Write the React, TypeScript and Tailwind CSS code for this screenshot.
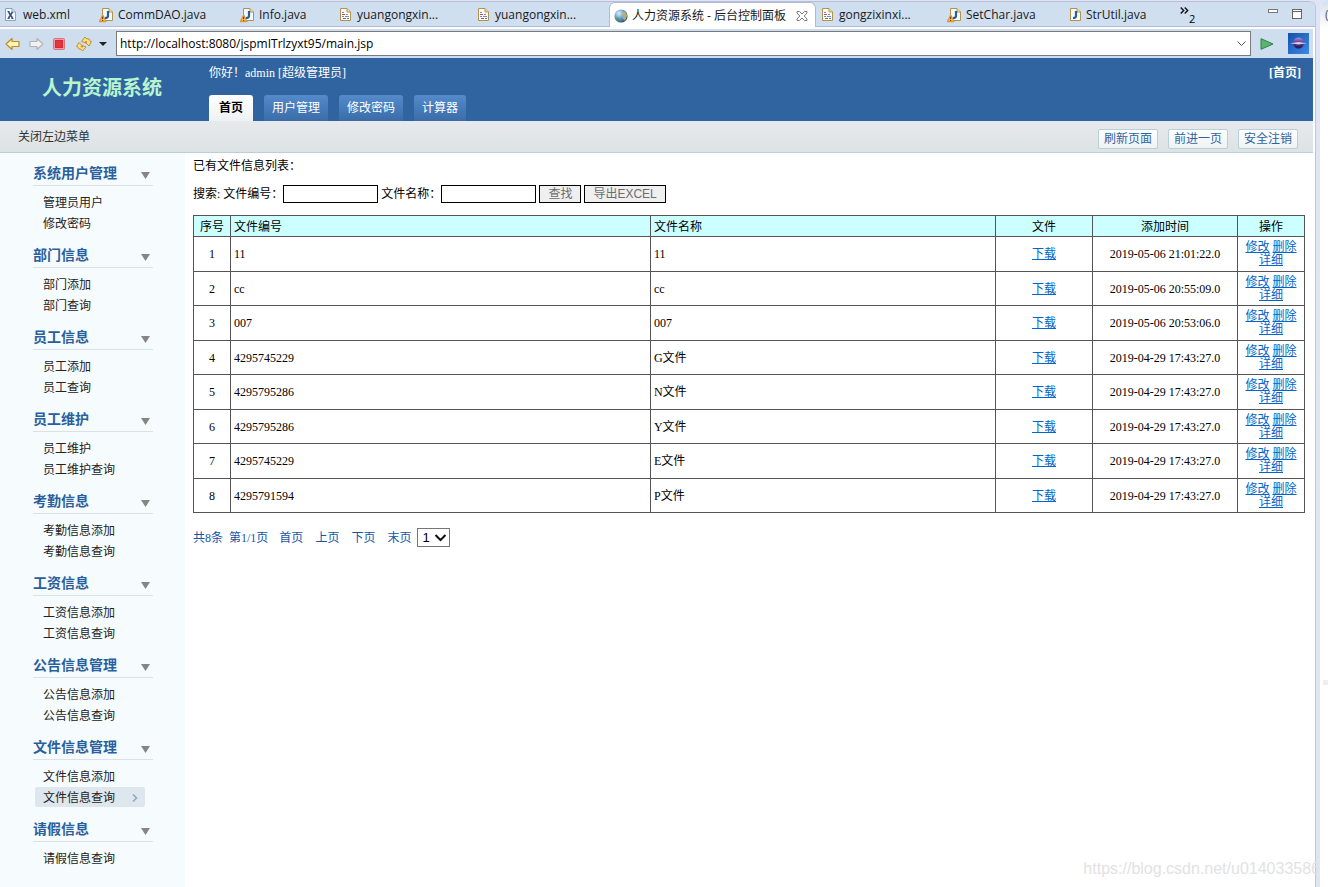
import React from 'react';

type FileKind = 'xml' | 'java' | 'javaWarn' | 'jsp';

const editorTabs: { label: string; kind: FileKind; width: string }[] = [
  { label: 'web.xml', kind: 'xml', width: 'w-[95px]' },
  { label: 'CommDAO.java', kind: 'javaWarn', width: 'w-[141px]' },
  { label: 'Info.java', kind: 'javaWarn', width: 'w-[98px]' },
  { label: 'yuangongxin...', kind: 'jsp', width: 'w-[138px]' },
  { label: 'yuangongxin...', kind: 'jsp', width: 'w-[133px]' },
];

const editorTabsAfter: { label: string; kind: FileKind; width: string }[] = [
  { label: 'gongzixinxi...', kind: 'jsp', width: 'w-[127px]' },
  { label: 'SetChar.java', kind: 'javaWarn', width: 'w-[120px]' },
  { label: 'StrUtil.java', kind: 'java', width: 'w-[113px]' },
];

const menu = [
  { title: '系统用户管理', items: ['管理员用户', '修改密码'] },
  { title: '部门信息', items: ['部门添加', '部门查询'] },
  { title: '员工信息', items: ['员工添加', '员工查询'] },
  { title: '员工维护', items: ['员工维护', '员工维护查询'] },
  { title: '考勤信息', items: ['考勤信息添加', '考勤信息查询'] },
  { title: '工资信息', items: ['工资信息添加', '工资信息查询'] },
  { title: '公告信息管理', items: ['公告信息添加', '公告信息查询'] },
  { title: '文件信息管理', items: ['文件信息添加', '文件信息查询'] },
  { title: '请假信息', items: ['请假信息查询'] },
];

const activeItem = '文件信息查询';

const rows = [
  ['11', '11', '2019-05-06 21:01:22.0'],
  ['cc', 'cc', '2019-05-06 20:55:09.0'],
  ['007', '007', '2019-05-06 20:53:06.0'],
  ['4295745229', 'G文件', '2019-04-29 17:43:27.0'],
  ['4295795286', 'N文件', '2019-04-29 17:43:27.0'],
  ['4295795286', 'Y文件', '2019-04-29 17:43:27.0'],
  ['4295745229', 'E文件', '2019-04-29 17:43:27.0'],
  ['4295791594', 'P文件', '2019-04-29 17:43:27.0'],
];

function FileIcon({ kind }: { kind: FileKind }) {
  return (
    <svg width="16" height="16" viewBox="0 0 16 16" className="shrink-0" aria-hidden="true">
      {kind === 'xml' && (
        <>
          <path d="M1.500 1.500H8l3.500 3.500v8.500h-10z" fill="#f4f9ff" stroke="#93a1b0" />
          <path d="M8 1.500V5h3.500" fill="#d9e2ee" stroke="#93a1b0" />
          <path d="M4.500 5l4 6M8.500 5l-4 6" stroke="#2d4f80" strokeWidth="1.500" />
          <path d="M3.500 4.500h2M7.500 11.500h2M3.500 11.500h2" stroke="#2d4f80" />
        </>
      )}
      {kind === 'jsp' && (
        <>
          <path d="M2.500 1.500H9l3.500 3.500v8.500h-10z" fill="#fff" stroke="#b5924a" />
          <path d="M9 1.500V5h3.500" fill="#f3dfa8" stroke="#b5924a" />
          <path d="M4 5.500h2" stroke="#6a8bd0" />
          <path d="M4 7.500h3" stroke="#d0435c" />
          <path d="M8 7.500h2" stroke="#6a8bd0" />
          <path d="M4 9.500h2M7 9.500h4" stroke="#6a8bd0" />
          <path d="M5 11.500h3" stroke="#d0435c" />
          <path d="M9 11.500h2" stroke="#3f9a6a" />
        </>
      )}
      {(kind === 'java' || kind === 'javaWarn') && (
        <>
          <path d="M3.500 1.500H10l3.500 3.500v8.500h-10z" fill="#f5faff" stroke="#b5924a" />
          <path d="M10 1.500V5h3.500" fill="#f3dfa8" stroke="#b5924a" />
          <path d="M9 4v4.700q0 2.300-3 2.300" fill="none" stroke="#23619f" strokeWidth="2.200" />
        </>
      )}
      {kind === 'javaWarn' && (
        <>
          <path d="M3.700 8L7 14.500H.5z" fill="#f8c468" stroke="#e0953a" strokeWidth="1.300" strokeLinejoin="round" />
          <path d="M3.700 9.800v2.400M3.700 13v1" stroke="#5a3208" />
        </>
      )}
    </svg>
  );
}

function GlobeIcon() {
  return (
    <svg width="14" height="14" viewBox="0 0 14 14" className="shrink-0" aria-hidden="true">
      <defs>
        <radialGradient id="globe" cx="35%" cy="30%" r="75%">
          <stop offset="0" stopColor="#d9ecfa" />
          <stop offset="0.5" stopColor="#6fa2cf" />
          <stop offset="1" stopColor="#27507f" />
        </radialGradient>
      </defs>
      <circle cx="7" cy="7" r="6.600" fill="url(#globe)" />
      <path d="M1 9Q3 8 5 9l1 3.500Q2.500 12.500 1 9z" fill="#4f9a5c" opacity=".8" />
      <path d="M8 4l3-1.500L13 6l-1 4-2 1.500L8.500 8z" fill="#c3b56e" opacity=".85" />
    </svg>
  );
}

function EditorTab({ label, kind, width }: { label: string; kind: FileKind; width: string }) {
  return (
    <button type="button" className={`flex shrink-0 items-center gap-[3px] whitespace-nowrap pt-[2px] ${width}`}>
      <FileIcon kind={kind} />
      <span>{label}</span>
    </button>
  );
}

function EditorTabs() {
  return (
    <div className="flex h-[26px] items-stretch rounded-tr-md border-t border-[#b9bfd6] bg-[#cfdff0] text-[12px] text-[#1a1a1a]">
      <div className="flex border-b border-[#b4b9d6] pl-1">
        {editorTabs.map((tab, i) => (
          <EditorTab key={i} {...tab} />
        ))}
      </div>
      <div className="flex w-[207px] shrink-0 items-center gap-1 whitespace-nowrap rounded-t-md border-x border-t border-[#b4b9d6] bg-white pl-1 pt-px">
        <GlobeIcon />
        <button type="button">人力资源系统 - 后台控制面板</button>
        <button type="button" aria-label="关闭" className="ml-[6px]">
          <svg width="12" height="12" viewBox="0 0 12 12" aria-hidden="true">
            <path
              d="M1 1.500h2.500L6 4l2.500-2.500H11V3L8.200 6 11 9v1.500H8.500L6 8l-2.500 2.500H1V9l2.800-3L1 3z"
              fill="#fff"
              stroke="#7c7c7c"
            />
          </svg>
        </button>
      </div>
      <div className="flex flex-1 items-center border-b border-[#b4b9d6] pl-1 pr-3">
        {editorTabsAfter.map((tab) => (
          <EditorTab key={tab.label} {...tab} />
        ))}
        <button type="button" className="flex items-center text-black" aria-label="更多标签">
          <svg width="9" height="7" viewBox="0 0 9 7" className="mb-2" aria-hidden="true">
            <path d="M.7.500l3 3-3 3M4.700.500l3 3-3 3" fill="none" stroke="#111" strokeWidth="1.400" />
          </svg>
          <span className="mt-2 text-[11px] leading-none">2</span>
        </button>
        <div className="ml-auto flex items-center gap-3">
          <button type="button" aria-label="最小化">
            <svg width="11" height="14" viewBox="0 0 11 14" aria-hidden="true">
              <rect x=".5" y="2.500" width="9" height="3" fill="#fff" stroke="#777" />
            </svg>
          </button>
          <button type="button" aria-label="最大化">
            <svg width="12" height="14" viewBox="0 0 12 14" aria-hidden="true">
              <rect x="1.500" y="2.500" width="9" height="9" fill="#fff" stroke="#666" />
              <path d="M2 4.500h8" stroke="#666" />
            </svg>
          </button>
        </div>
      </div>
    </div>
  );
}

function BrowserBar() {
  return (
    <div className="mr-[2px] flex h-[31px] items-center border-t-2 border-white bg-[#cfdeef] pl-[5px] pr-1">
      <div className="flex shrink-0 items-center">
        <button type="button" aria-label="后退" className="w-[23px]">
          <svg width="16" height="14" viewBox="0 0 16 14" aria-hidden="true">
            <path d="M1 7l6-5.500V4.500h7v5H7v3z" fill="#fff3b8" stroke="#c08a1e" strokeLinejoin="round" strokeWidth="1.200" />
          </svg>
        </button>
        <button type="button" aria-label="前进" className="w-[25px]">
          <svg width="16" height="14" viewBox="0 0 16 14" aria-hidden="true">
            <path d="M15 7L9 1.500V4.500H2v5h7v3z" fill="#f2f2f2" stroke="#b2b2b2" strokeLinejoin="round" strokeWidth="1.200" />
          </svg>
        </button>
        <button type="button" aria-label="停止" className="w-[23px]">
          <svg width="12" height="12" viewBox="0 0 12 12" aria-hidden="true">
            <rect x=".5" y=".5" width="11" height="11" rx="1" fill="#f0a0a4" stroke="#d8737a" />
            <rect x="2.500" y="2.500" width="7" height="7" fill="#e5343c" stroke="#d42a35" />
          </svg>
        </button>
        <button type="button" aria-label="刷新" className="w-[23px]">
          <svg width="16" height="16" viewBox="0 0 16 16" aria-hidden="true">
            <path
              d="M5.500 5.500L9 1l1 1.500q4-.5 4.500 3l1 0L13 10 9.500 6.500l1.500-.5q-.5-1-1.500-.5l.5 1.500z"
              fill="#fbdf8c"
              stroke="#c4902a"
              strokeLinejoin="round"
            />
            <path
              d="M10 11l-3.500 4-1-1.500q-3.500 0-4-3H.500L3 6.500 6.500 10l-1.500.5q.5 1 1.500.5L6 9.500z"
              fill="#fbdf8c"
              stroke="#c4902a"
              strokeLinejoin="round"
            />
          </svg>
        </button>
        <button type="button" aria-label="刷新选项" className="w-[17px]">
          <svg width="8" height="4" viewBox="0 0 8 4" aria-hidden="true">
            <path d="M0 0h8L4 4z" fill="#222" />
          </svg>
        </button>
      </div>
      <div className="flex h-[25px] min-w-0 flex-1 items-center border border-[#7a7a7a] bg-white pl-[3px] pr-1">
        <input
          aria-label="地址"
          defaultValue="http://localhost:8080/jspmITrlzyxt95/main.jsp"
          className="min-w-0 flex-1 text-[12px] text-black outline-none"
        />
        <svg width="9" height="6" viewBox="0 0 9 6" aria-hidden="true">
          <path d="M.5.500l4 4 4-4" fill="none" stroke="#555" />
        </svg>
      </div>
      <button type="button" aria-label="转到" className="ml-[9px] shrink-0">
        <svg width="14" height="12" viewBox="0 0 14 12" aria-hidden="true">
          <path d="M1 .700L13 6 1 11.300z" fill="#5cb56c" stroke="#2b8143" strokeLinejoin="round" />
        </svg>
      </button>
      <svg width="21" height="21" viewBox="0 0 21 21" className="ml-[14px] shrink-0" aria-hidden="true">
        <defs>
          <linearGradient id="eclipseSky" x2="1" y2="1">
            <stop offset="0" stopColor="#1450a8" />
            <stop offset="1" stopColor="#3b8bea" />
          </linearGradient>
          <linearGradient id="eclipseOrb" x2="0" y2="1">
            <stop offset="0" stopColor="#a58fd0" />
            <stop offset=".45" stopColor="#5d3f94" />
            <stop offset="1" stopColor="#1f1650" />
          </linearGradient>
        </defs>
        <rect width="21" height="21" fill="url(#eclipseSky)" />
        <circle cx="10.500" cy="10" r="5.500" fill="url(#eclipseOrb)" />
        <path d="M2 10.200L10.500 9l8.500 1.200-8.500 1.200z" fill="#d9c9f2" />
      </svg>
    </div>
  );
}

function SiteHeader() {
  const tab =
    'flex h-[26px] items-center rounded-t-[3px] bg-gradient-to-b from-[#548bcb] to-[#3a6ca8] px-2 text-white';
  return (
    <header className="flex h-[63px] bg-[#3064a0] pr-3">
      <h1 className="w-[209px] shrink-0 pl-[42px] pt-4 text-[20px] font-bold leading-7 text-[#b8f5cf]">人力资源系统</h1>
      <div className="flex min-w-0 flex-1 flex-col justify-between">
        <div className="flex justify-between pt-[6px] leading-[18px] text-white">
          <span>你好！admin [超级管理员]</span>
          <a href="#home" className="font-bold">[首页]</a>
        </div>
        <nav className="flex gap-[11px]">
          <a
            href="#home"
            className="flex h-[26px] items-center rounded-t-[3px] bg-gradient-to-b from-white to-[#eef1f2] px-[10px] font-bold text-black"
          >
            首页
          </a>
          <a href="#users" className={tab}>用户管理</a>
          <a href="#password" className={tab}>修改密码</a>
          <a href="#calculator" className={tab}>计算器</a>
        </nav>
      </div>
    </header>
  );
}

function ActionBar() {
  return (
    <div className="flex h-8 items-center justify-between border-b border-[#bccfd8] bg-gradient-to-b from-[#e6eaec] to-[#dde2e4] pl-[18px] pr-[15px] pt-px">
      <button type="button" className="text-[#333]">关闭左边菜单</button>
      <div className="flex gap-[10px] pt-[3px]">
        {['刷新页面', '前进一页', '安全注销'].map((label) => (
          <button
            key={label}
            type="button"
            className="h-5 w-[60px] rounded-[2px] border border-[#b8d0d8] bg-gradient-to-b from-white to-[#eef2f3] leading-4 text-[#2f63a3]"
          >
            {label}
          </button>
        ))}
      </div>
    </div>
  );
}

function Sidebar() {
  return (
    <aside className="w-[185px] shrink-0 bg-[#f6fbfd] pl-[33px] pr-8 pt-[10px]">
      {menu.map((group) => (
        <section key={group.title} className="pb-3">
          <h2 className="flex h-[23px] items-center justify-between border-b border-[#dae2e8] pb-px pr-[3px] text-[14px] font-bold text-[#2a5f9e]">
            {group.title}
            <svg width="9" height="7" viewBox="0 0 9 7" className="mt-[3px]" aria-hidden="true">
              <path d="M0 0h9L4.500 7z" fill="#858585" />
            </svg>
          </h2>
          <ul className="flex flex-col gap-px pl-[2px] pr-2 pt-[6px]">
            {group.items.map((item) => (
              <li key={item}>
                <a
                  href="#menu"
                  className={`flex h-5 items-center justify-between rounded-[2px] pl-2 pr-[7px] pt-px text-[#222] ${
                    item === activeItem ? 'bg-[#dee6ee]' : ''
                  }`}
                >
                  {item}
                  {item === activeItem && (
                    <svg width="6" height="8" viewBox="0 0 6 8" aria-hidden="true">
                      <path d="M1 .500L4.500 4 1 7.500" fill="none" stroke="#93a9c4" strokeWidth="1.600" />
                    </svg>
                  )}
                </a>
              </li>
            ))}
          </ul>
        </section>
      ))}
    </aside>
  );
}

function SearchForm() {
  const button = 'h-[18px] border border-black bg-[#efefef] px-2 leading-4 text-[#6d6d6d]';
  const input = 'h-[18px] w-[95px] border border-black bg-white px-1 outline-none';
  return (
    <form className="mt-[10px] flex h-[18px] items-center gap-[3px]" onSubmit={(e) => e.preventDefault()}>
      <span>搜索:</span>
      <div className="flex items-center">
        <label htmlFor="file-code">文件编号：</label>
        <input id="file-code" className={input} />
      </div>
      <div className="flex items-center">
        <label htmlFor="file-name">文件名称：</label>
        <input id="file-name" className={input} />
      </div>
      <button type="submit" className={button}>查找</button>
      <button type="button" className={button}>
        导出<span className="font-['Liberation_Sans',sans-serif]">EXCEL</span>
      </button>
    </form>
  );
}

function FileTable() {
  const cell = 'border border-[#555] px-[3px]';
  const link = 'text-[#0066cc] underline';
  return (
    <table className="mt-3 w-full table-fixed border-collapse text-black">
      <colgroup>
        <col className="w-[37px]" />
        <col className="w-[37.8%]" />
        <col />
        <col className="w-[97px]" />
        <col className="w-[145px]" />
        <col className="w-[67px]" />
      </colgroup>
      <thead>
        <tr className="h-[21px] bg-[#ccffff]">
          <th className={`${cell} pt-px font-normal`}>序号</th>
          <th className={`${cell} pt-px text-left font-normal`}>文件编号</th>
          <th className={`${cell} pt-px text-left font-normal`}>文件名称</th>
          <th className={`${cell} pt-px font-normal`}>文件</th>
          <th className={`${cell} pt-px font-normal`}>添加时间</th>
          <th className={`${cell} pt-px font-normal`}>操作</th>
        </tr>
      </thead>
      <tbody>
        {rows.map(([code, name, time], i) => (
          <tr key={i} className="odd:h-[35px] even:h-[34px]">
            <td className={`${cell} text-center`}>{i + 1}</td>
            <td className={cell}>{code}</td>
            <td className={cell}>{name}</td>
            <td className={`${cell} text-center`}>
              <a href="#download" className={link}>下载</a>
            </td>
            <td className={`${cell} text-center`}>{time}</td>
            <td className={`${cell} text-center leading-[13px]`}>
              <a href="#edit" className={link}>修改</a> <a href="#delete" className={link}>删除</a>{' '}
              <a href="#detail" className={link}>详细</a>
            </td>
          </tr>
        ))}
      </tbody>
    </table>
  );
}

function Pager() {
  return (
    <div className="mt-[15px] flex h-[19px] items-center text-[#1356a8]">
      <span>共8条</span>
      <span className="ml-[6px]">第1/1页</span>
      <nav className="ml-[11px] flex gap-3">
        <a href="#first">首页</a>
        <a href="#prev">上页</a>
        <a href="#next">下页</a>
        <a href="#last">末页</a>
      </nav>
      <div className="relative ml-[6px]">
        <select
          aria-label="页码"
          className="block h-[19px] w-[33px] appearance-none border border-[#767676] bg-white pl-1 font-['Liberation_Sans',sans-serif] text-[13px] leading-4 text-black"
        >
          <option>1</option>
        </select>
        <svg width="13" height="8" viewBox="0 0 13 8" className="pointer-events-none absolute right-[3px] top-[6px]" aria-hidden="true">
          <path d="M1.500 1l5 5 5-5" fill="none" stroke="#111" strokeWidth="2" />
        </svg>
      </div>
    </div>
  );
}

export default function App() {
  return (
    <div className="relative flex min-h-screen overflow-hidden bg-[#dfe5f6] font-['Open_Sans','Noto_Sans_CJK_SC',sans-serif]">
      <div className="mt-px flex min-w-0 flex-1 flex-col rounded-tr-md border-r border-[#c6c7cd] bg-white">
        <EditorTabs />
        <BrowserBar />
        <div className="mr-[2px] flex flex-1 flex-col font-['Liberation_Serif','Noto_Sans_CJK_SC',serif] text-[12px] leading-[18px]">
          <SiteHeader />
          <ActionBar />
          <div className="flex flex-1">
            <Sidebar />
            <main className="min-w-0 flex-1 pl-2 pr-2 pt-1 text-black">
              <p>已有文件信息列表：</p>
              <SearchForm />
              <FileTable />
              <Pager />
            </main>
          </div>
        </div>
      </div>
      <div className="ml-1 mt-px flex w-2 shrink-0 flex-col overflow-hidden rounded-tl-md bg-white">
        <div className="h-7 bg-gradient-to-b from-[#d5e1f1] to-white pl-[5px] pt-1 text-[12px] leading-5 text-[#555]">(</div>
        <div className="ml-[3px] mt-[651px] h-[5px] bg-[#eeeeee]" />
      </div>
      <div className="pointer-events-none absolute bottom-1 right-2 font-['Liberation_Sans',sans-serif] text-[16px] leading-7 text-[#e2e2e2]">
        https://blog.csdn.net/u014033586
      </div>
    </div>
  );
}
